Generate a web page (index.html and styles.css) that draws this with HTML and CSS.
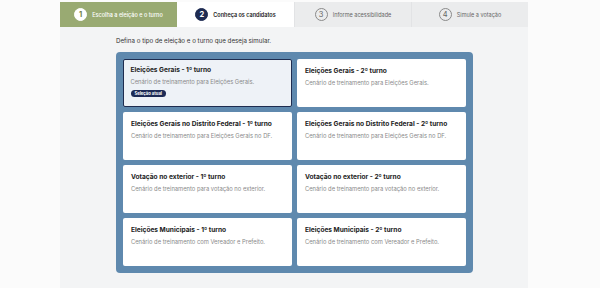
FILE: index.html
```html
<!DOCTYPE html>
<html lang="pt-BR">
<head>
    <meta charset="UTF-8">
    <meta name="viewport" content="width=device-width, initial-scale=1.0">
    <title>Simulador de votação</title>
    <link rel="stylesheet" href="styles.css">
</head>
<body>

    <div class="page">
        <!-- Etapas do simulador -->
        <nav class="steps">
            <div class="step done"><span class="num">1</span>Escolha a eleição e o turno</div>
            <div class="step current"><span class="num">2</span>Conheça os candidatos</div>
            <div class="step"><span class="num">3</span>Informe acessibilidade</div>
            <div class="step"><span class="num">4</span>Simule a votação</div>
        </nav>

        <main class="content">
            <p class="intro">Defina o tipo de eleição e o turno que deseja simular.</p>

            <div class="options">
                <div class="option selected">
                    <div class="title">Eleições Gerais - 1º turno</div>
                    <div class="desc">Cenário de treinamento para Eleições Gerais.</div>
                    <span class="badge">Seleção atual</span>
                </div>
                <div class="option">
                    <div class="title">Eleições Gerais - 2º turno</div>
                    <div class="desc">Cenário de treinamento para Eleições Gerais.</div>
                </div>
                <div class="option">
                    <div class="title">Eleições Gerais no Distrito Federal - 1º turno</div>
                    <div class="desc">Cenário de treinamento para Eleições Gerais no DF.</div>
                </div>
                <div class="option">
                    <div class="title">Eleições Gerais no Distrito Federal - 2º turno</div>
                    <div class="desc">Cenário de treinamento para Eleições Gerais no DF.</div>
                </div>
                <div class="option">
                    <div class="title">Votação no exterior - 1º turno</div>
                    <div class="desc">Cenário de treinamento para votação no exterior.</div>
                </div>
                <div class="option">
                    <div class="title">Votação no exterior - 2º turno</div>
                    <div class="desc">Cenário de treinamento para votação no exterior.</div>
                </div>
                <div class="option">
                    <div class="title">Eleições Municipais - 1º turno</div>
                    <div class="desc">Cenário de treinamento com Vereador e Prefeito.</div>
                </div>
                <div class="option">
                    <div class="title">Eleições Municipais - 2º turno</div>
                    <div class="desc">Cenário de treinamento com Vereador e Prefeito.</div>
                </div>
            </div>
        </main>
    </div>

</body>
</html>
```

FILE: styles.css
```css
/* Simulador - escolha da eleição */
body {
    font-family: Inter, "Noto Sans", sans-serif;
    margin: 0;
    background-color: #fbfbfb;
    height: 288px;
    overflow: hidden;
}

.page {
    width: 468px;
    margin: 0 0 0 60px;
    padding-top: 2px;
    display: flex;
    flex-direction: column;
    height: 286px;
}

.steps {
    display: grid;
    grid-template-columns: repeat(4, 1fr);
    height: 25px;
}

.step {
    display: flex;
    justify-content: center;
    align-items: center;
    gap: 5px;
    font-size: 5.5px;
    color: #666;
    background-color: #ebeced;
    border-left: 1px solid #e2e3e5;
}

.step .num {
    width: 11px;
    height: 11px;
    border-radius: 50%;
    border: 1px solid #8a8a8a;
    display: flex;
    justify-content: center;
    align-items: center;
    font-size: 7.5px;
    color: #666;
}

.step.done {
    background-color: #99aa72;
    color: #fff;
    font-weight: 500;
    border-left: none;
}

.step.done .num {
    background-color: #fff;
    border-color: #fff;
    color: #6f8048;
    font-weight: 700;
}

.step.current {
    background-color: #fff;
    color: #222;
    font-weight: 600;
    border-left: none;
}

.step.current .num {
    background-color: #1e2b52;
    border-color: #1e2b52;
    color: #fff;
    font-weight: 700;
}

.content {
    flex: 1;
    background-color: #f3f4f5;
    padding: 10px 0 0 56px;
}

.intro {
    margin: 0 0 7px;
    font-size: 6.2px;
    line-height: 8px;
    color: #333;
}

.options {
    width: 343px;
    display: grid;
    grid-template-columns: repeat(2, 169px);
    grid-auto-rows: 48px;
    gap: 5px;
    padding: 7px;
    background-color: #5f89ae;
    border-radius: 4px;
}

.option {
    background-color: #fff;
    border-radius: 2px;
    padding: 7.5px 8px 0;
    box-sizing: border-box;
    line-height: 8px;
}

.option.selected {
    background-color: #eef2f7;
    border: 1.5px solid #1f2d50;
    padding: 6px 6.5px 0;
}

.title {
    font-size: 6.6px;
    line-height: 8px;
    font-weight: 700;
    color: #222;
}

.desc {
    margin-top: 4px;
    font-size: 5.8px;
    line-height: 8px;
    color: #8a8a8a;
}

.badge {
    display: block;
    width: fit-content;
    margin-top: 4px;
    padding: 0 4px;
    height: 7px;
    line-height: 7px;
    border-radius: 4px;
    background-color: #1c2a55;
    color: #fff;
    font-size: 4.2px;
    font-weight: 700;
}
```
